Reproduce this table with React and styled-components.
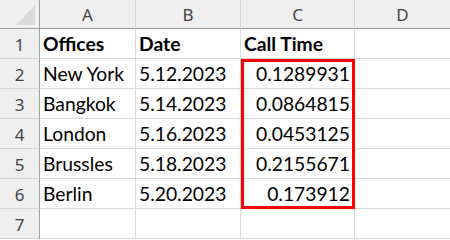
import styled, { createGlobalStyle } from 'styled-components';

const GlobalStyle = createGlobalStyle`
  html, body {
    margin: 0;
    padding: 0;
    background: #ffffff;
    overflow: hidden;
  }
`

const Sheet = styled.div`
  position: relative;
  display: grid;
  grid-template-columns: 40px 96px 105px 114px 96px;
  grid-auto-rows: 30px;
  grid-template-rows: 29px;
  width: 451px;
`

const Corner = styled.div`
  box-sizing: border-box;
  background: #efefef;
  border-right: 1px solid #a0a0a0;
  border-bottom: 1px solid #a0a0a0;
  display: flex;
  align-items: flex-start;
  justify-content: flex-end;
  padding: 5px 4px 0 0;

  &::after {
    content: '';
    width: 0;
    height: 0;
    border-left: 19px solid transparent;
    border-bottom: 20px solid #dadada;
  }
`

const ColHeader = styled.div`
  box-sizing: border-box;
  background: #efefef;
  border-right: 1px solid #d4d4d4;
  border-bottom: 1px solid #a0a0a0;
  color: #444444;
  font-family: "Noto Sans", "Open Sans", sans-serif;
  font-size: 17px;
  display: flex;
  align-items: center;
  justify-content: center;
  padding-top: 1px;
`

const RowHeader = styled.div`
  box-sizing: border-box;
  background: #efefef;
  border-right: 1px solid #a0a0a0;
  border-bottom: 1px solid #d4d4d4;
  color: #444444;
  font-family: "Noto Sans", "Open Sans", sans-serif;
  font-size: 17px;
  display: flex;
  align-items: center;
  justify-content: center;
  padding-top: 2px;
`

const Cell = styled.div`
  box-sizing: border-box;
  border-right: 1px solid #d9d9d9;
  border-bottom: 1px solid #d9d9d9;
  color: #000000;
  font-family: Lato, "Liberation Sans", sans-serif;
  font-size: 19.3px;
  font-weight: ${p => (p.$bold ? 700 : 400)};
  display: flex;
  align-items: flex-end;
  justify-content: ${p => (p.$num ? 'flex-end' : 'flex-start')};
  padding: 0 4px 3px 3px;
  white-space: nowrap;
  overflow: hidden;
`

// red outline over the Call Time values, sized by its grid area
const Highlight = styled.div`
  position: absolute;
  inset: 0;
  box-sizing: border-box;
  grid-column: 4 / 5;
  grid-row: 3 / 8;
  border: 3px solid #ff0000;
  pointer-events: none;
`

const columns = ['A', 'B', 'C', 'D'];

const rows = [
  ['Offices', 'Date', 'Call Time'],
  ['New York', '5.12.2023', '0.1289931'],
  ['Bangkok', '5.14.2023', '0.0864815'],
  ['London', '5.16.2023', '0.0453125'],
  ['Brussles', '5.18.2023', '0.2155671'],
  ['Berlin', '5.20.2023', '0.173912'],
  ['', '', ''],
];

function App() {
  return (
    <>
      <GlobalStyle />
      <Sheet>
        <Corner />
        {columns.map(c => (
          <ColHeader key={c}>{c}</ColHeader>
        ))}
        {rows.map((row, i) => (
          <Row key={i} index={i} row={row} />
        ))}
        <Highlight />
      </Sheet>
    </>
  );
}

function Row({ index, row }) {
  const header = index === 0;
  return (
    <>
      <RowHeader>{index + 1}</RowHeader>
      <Cell $bold={header}>{row[0]}</Cell>
      <Cell $bold={header}>{row[1]}</Cell>
      <Cell $bold={header} $num={!header}>{row[2]}</Cell>
      <Cell />
    </>
  );
}

export default App;
